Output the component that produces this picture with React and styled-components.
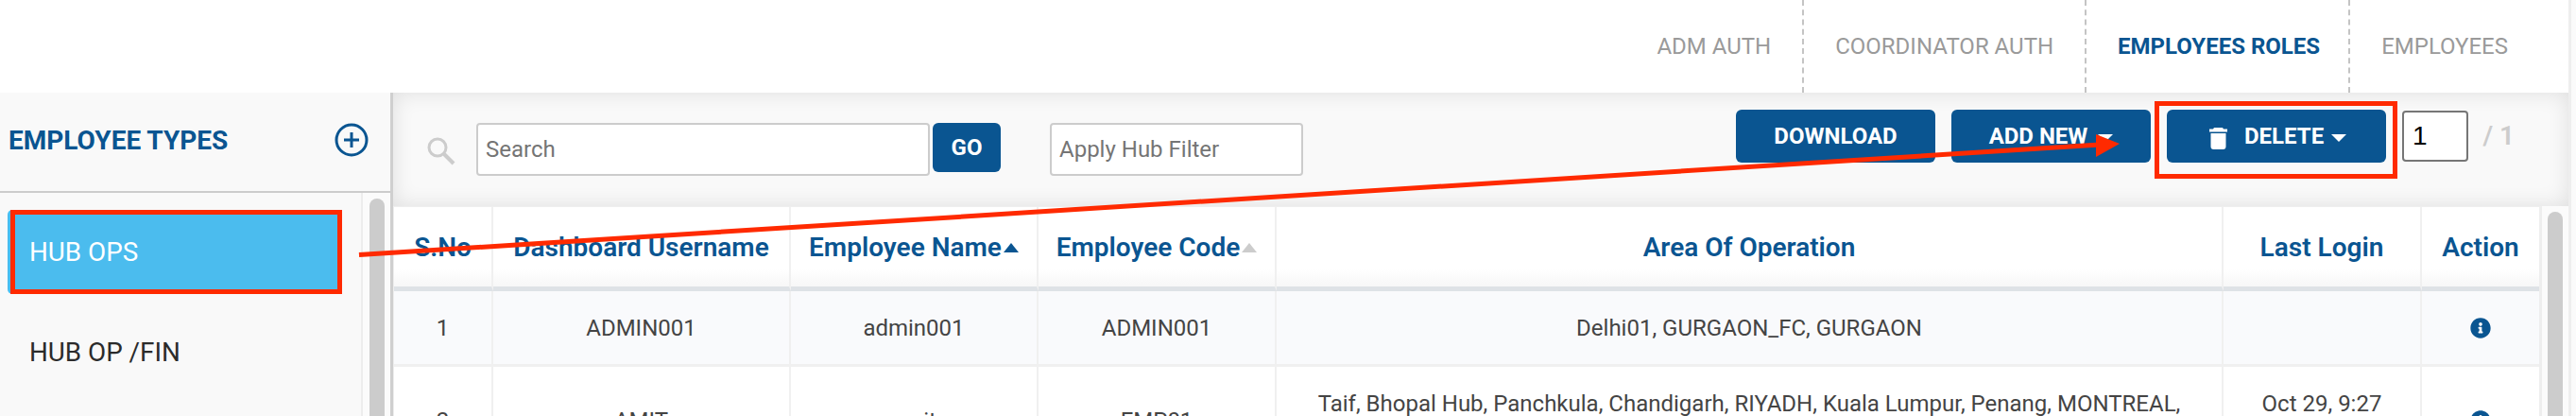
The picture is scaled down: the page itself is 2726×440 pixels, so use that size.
import React from "react";
import styled, { createGlobalStyle } from "styled-components";
import { FaInfoCircle } from "react-icons/fa";

const BLUE = "#0a5591";
const RED = "#ff2a00";

const GlobalStyle = createGlobalStyle`
  html, body {
    margin: 0;
    padding: 0;
    background: #fff;
  }
  * {
    box-sizing: border-box;
  }
  body {
    font-family: Roboto, "Liberation Sans", sans-serif;
    font-size: 24px;
  }
`;

const Page = styled.div`
  position: relative;
  display: flex;
  width: 2726px;
  height: 440px;
  overflow: hidden;
`;

const Frame = styled.div`
  width: 2718px;
  flex: none;
`;

const PageEdge = styled.div`
  flex: 1;
  background: #fafafa;
  border-left: 3px solid #eee;
`;

const TopBar = styled.div`
  height: 98px;
  display: flex;
  justify-content: flex-end;
  padding-right: 31px;
`;

const Tab = styled.div`
  display: flex;
  align-items: center;
  padding: ${(p) => (p.$active ? "0 30px 0 33px" : "0 33px")};
  color: ${(p) => (p.$active ? BLUE : "#9a9a9a")};
  font-weight: ${(p) => (p.$active ? 700 : 400)};
  border-left: ${(p) => (p.$first ? "none" : "2px dashed #c4c4c4")};
`;

const Content = styled.div`
  display: flex;
  height: 342px;
`;

const Sidebar = styled.aside`
  width: 416px;
  flex: none;
  background: #f9f9f9;
  border-right: 3px solid #cfcfcf;
`;

const SidebarHead = styled.div`
  height: 106px;
  display: flex;
  align-items: center;
  justify-content: space-between;
  padding: 0 23px 4px 9px;
  border-bottom: 2px solid #ccc;
`;

const SidebarTitle = styled.div`
  color: ${BLUE};
  font-size: 28px;
  font-weight: 700;
`;

const SidebarBody = styled.div`
  display: flex;
  height: 236px;
`;

const TypeList = styled.div`
  width: 384px;
  padding: 18px 20px 0 8px;
  border-right: 2px solid #ededed;
`;

const TypeItem = styled.div`
  position: relative;
  height: 89px;
  margin-bottom: 17px;
  padding-left: 23px;
  display: flex;
  align-items: center;
  font-size: 27.8px;
  color: ${(p) => (p.$active ? "#fff" : "#2b2b2b")};
  background: ${(p) => (p.$active ? "#4bbcee" : "transparent")};
  border-radius: 5px 0 0 5px;
`;

const RedFrame = styled.span`
  position: absolute;
  top: ${(p) => p.$top}px;
  right: ${(p) => p.$right}px;
  bottom: ${(p) => p.$bottom}px;
  left: ${(p) => p.$left}px;
  border: 5px solid ${RED};
  pointer-events: none;
`;

const Scrollbar = styled.div`
  flex: 1;
  padding: ${(p) => p.$top}px ${(p) => p.$right}px 0 ${(p) => p.$left}px;
  background: #fbfbfb;
`;

const ScrollThumb = styled.div`
  height: 400px;
  background: #ccc;
  border-radius: 8px 8px 0 0;
`;

const Main = styled.div`
  width: 2302px;
  flex: none;
`;

const Toolbar = styled.div`
  height: 120px;
  display: flex;
  align-items: flex-start;
  padding: 18px 57px 0 36px;
  background: #f9f9f9;
  box-shadow: inset 0 0 22px rgba(0, 0, 0, 0.11);
`;

const SearchIcon = styled.svg`
  width: 30px;
  height: 30px;
  margin: 29px 22px 0 0;
  flex: none;
`;

const Field = styled.input`
  width: ${(p) => p.$width}px;
  height: 56px;
  margin-top: 14px;
  padding: 0 8px;
  border: 2px solid #ccc;
  border-radius: 4px;
  background: #fff;
  font: inherit;
  color: #444;
  outline: none;
  flex: none;
  &::placeholder {
    color: #757575;
    opacity: 1;
  }
`;

const GoButton = styled.button`
  width: 72px;
  height: 52px;
  margin: 14px 52px 0 3px;
  flex: none;
  border: none;
  border-radius: 6px;
  background: ${BLUE};
  color: #fff;
  font: inherit;
  font-weight: 700;
`;

const ActionGroup = styled.div`
  display: flex;
  gap: 17px;
  margin-left: auto;
  flex: none;
`;

const ActionButton = styled.button`
  position: relative;
  width: ${(p) => p.$width}px;
  height: 56px;
  display: flex;
  align-items: center;
  justify-content: ${(p) => (p.$inset ? "flex-start" : "center")};
  padding: 0 0 0 ${(p) => p.$inset || 0}px;
  border: none;
  border-radius: 6px;
  background: ${BLUE};
  color: #fff;
  font: inherit;
  font-weight: 700;
  flex: none;
`;

const Caret = styled.span`
  width: 0;
  height: 0;
  margin-left: ${(p) => p.$gap}px;
  margin-top: 3px;
  border-left: 8px solid transparent;
  border-right: 8px solid transparent;
  border-top: 8px solid #fff;
`;

const TrashIcon = styled.svg`
  width: 19px;
  height: 23px;
  margin: 5px 18px 0 0;
  flex: none;
`;

const PageBox = styled.input`
  width: 70px;
  height: 54px;
  margin-top: 1px;
  padding: 0 9px;
  border: 2px solid #767676;
  border-radius: 4px;
  background: #fff;
  color: #000;
  font-family: "Liberation Sans", sans-serif;
  font-size: 28px;
  outline: none;
  flex: none;
`;

const PageTotal = styled.div`
  width: 49px;
  margin-left: -17px;
  line-height: 56px;
  font-size: 28px;
  font-weight: 600;
  color: #ccc;
  white-space: nowrap;
  flex: none;
  text-align: right;
`;

const TableRow = styled.div`
  display: flex;
  height: 222px;
`;

const TableWrap = styled.div`
  width: 2274px;
  flex: none;
  padding: 1px 3px 0 1px;
  background: #eee;
`;

const Table = styled.table`
  width: 2270px;
  table-layout: fixed;
  border-collapse: separate;
  border-spacing: 0;
`;

const HeadCell = styled.th`
  height: 89px;
  padding: 0;
  color: ${BLUE};
  font-size: 28px;
  font-weight: 600;
  text-align: center;
  white-space: nowrap;
  background: linear-gradient(#fff 78%, #f7f7f7);
  border-right: 2px solid #f0f0f0;
  border-bottom: 5px solid #dee2e6;
  &:last-child {
    border-right: none;
  }
`;

const SortArrow = styled.span`
  display: inline-block;
  width: 0;
  height: 0;
  margin-left: 2px;
  vertical-align: 4px;
  border-left: 8px solid transparent;
  border-right: 8px solid transparent;
  border-bottom: 10px solid ${(p) => (p.$on ? BLUE : "#ccc")};
`;

const Cell = styled.td`
  height: ${(p) => (p.$tall ? 116 : 80)}px;
  padding: 0 40px;
  color: #444;
  line-height: 36px;
  text-align: center;
  background: ${(p) => (p.$alt ? "#f9fafc" : "#fff")};
  border-right: 2px solid #f0f0f0;
  border-bottom: 3px solid #f0f0f0;
  &:last-child {
    border-right: none;
  }
`;

const TightCell = styled(Cell)`
  padding: 0 4px;
`;

const InfoIcon = styled(FaInfoCircle)`
  display: block;
  margin: 0 auto;
  color: ${BLUE};
  font-size: 22px;
`;

const Overlay = styled.svg`
  position: absolute;
  top: 0;
  left: 0;
  pointer-events: none;
`;

const columns = [105, 315, 262, 252, 1002, 210, 124];

const rows = [
  {
    no: 1,
    user: "ADMIN001",
    name: "admin001",
    code: "ADMIN001",
    area: "Delhi01, GURGAON_FC, GURGAON",
    login: ""
  },
  {
    no: 2,
    user: "AMIT",
    name: "amit",
    code: "EMP01",
    area: "Taif, Bhopal Hub, Panchkula, Chandigarh, RIYADH, Kuala Lumpur, Penang, MONTREAL, GURGAON",
    login: "Oct 29, 9:27 AM"
  }
];

function App() {
  return (
    <Page>
      <GlobalStyle />
      <Frame>
        <TopBar>
          <Tab $first>ADM AUTH</Tab>
          <Tab>COORDINATOR AUTH</Tab>
          <Tab $active>EMPLOYEES ROLES</Tab>
          <Tab>EMPLOYEES</Tab>
        </TopBar>

        <Content>
          <Sidebar>
            <SidebarHead>
              <SidebarTitle>EMPLOYEE TYPES</SidebarTitle>
              <svg width="36" height="36" viewBox="0 0 36 36" fill="none">
                <circle cx="18" cy="18" r="16" stroke={BLUE} strokeWidth="3" />
                <path d="M18 10v16M10 18h16" stroke={BLUE} strokeWidth="3" />
              </svg>
            </SidebarHead>
            <SidebarBody>
              <TypeList>
                <TypeItem $active>
                  HUB OPS
                  <RedFrame $top={0} $right={0} $bottom={0} $left={3} />
                </TypeItem>
                <TypeItem>HUB OP /FIN</TypeItem>
              </TypeList>
              <Scrollbar $top={6} $left={7} $right={6}>
                <ScrollThumb />
              </Scrollbar>
            </SidebarBody>
          </Sidebar>

          <Main>
            <Toolbar>
              <SearchIcon viewBox="0 0 30 30" fill="none">
                <circle cx="11" cy="11" r="9" stroke="#ccc" strokeWidth="3" />
                <path d="M18 18l10 10" stroke="#ccc" strokeWidth="4" />
              </SearchIcon>
              <Field $width={480} placeholder="Search" />
              <GoButton>GO</GoButton>
              <Field $width={268} placeholder="Apply Hub Filter" />
              <ActionGroup>
                <ActionButton $width={211}>DOWNLOAD</ActionButton>
                <ActionButton $width={211}>
                  ADD NEW
                  <Caret $gap={11} />
                </ActionButton>
                <ActionButton $width={232} $inset={45}>
                  <TrashIcon viewBox="0 0 19 23">
                    <path
                      fill="#fff"
                      d="M5 0h9l1 1.5h4v3H0v-3h4zM1.500 6h16v14a3 3 0 0 1-3 3h-10a3 3 0 0 1-3-3z"
                    />
                  </TrashIcon>
                  DELETE
                  <Caret $gap={8} />
                  <RedFrame $top={-9} $right={-12} $bottom={-17} $left={-13} />
                </ActionButton>
                <PageBox defaultValue="1" />
                <PageTotal>/ 1</PageTotal>
              </ActionGroup>
            </Toolbar>

            <TableRow>
              <TableWrap>
                <Table>
                  <colgroup>
                    {columns.map((w, i) => (
                      <col key={i} width={w} />
                    ))}
                  </colgroup>
                  <thead>
                    <tr>
                      <HeadCell>S.No</HeadCell>
                      <HeadCell>Dashboard Username</HeadCell>
                      <HeadCell>
                        Employee Name
                        <SortArrow $on />
                      </HeadCell>
                      <HeadCell>
                        Employee Code
                        <SortArrow />
                      </HeadCell>
                      <HeadCell>Area Of Operation</HeadCell>
                      <HeadCell>Last Login</HeadCell>
                      <HeadCell>Action</HeadCell>
                    </tr>
                  </thead>
                  <tbody>
                    {rows.map((row, i) => {
                      const alt = i % 2 === 0;
                      const tall = i === 1;
                      return (
                        <tr key={row.no}>
                          <TightCell $alt={alt} $tall={tall}>{row.no}</TightCell>
                          <TightCell $alt={alt} $tall={tall}>{row.user}</TightCell>
                          <TightCell $alt={alt} $tall={tall}>{row.name}</TightCell>
                          <TightCell $alt={alt} $tall={tall}>{row.code}</TightCell>
                          <Cell $alt={alt} $tall={tall}>{row.area}</Cell>
                          <Cell $alt={alt} $tall={tall}>{row.login}</Cell>
                          <TightCell $alt={alt} $tall={tall}>
                            <InfoIcon />
                          </TightCell>
                        </tr>
                      );
                    })}
                  </tbody>
                </Table>
              </TableWrap>
              <Scrollbar $top={6} $left={6} $right={6}>
                <ScrollThumb />
              </Scrollbar>
            </TableRow>
          </Main>
        </Content>
      </Frame>
      <PageEdge />

      <Overlay width="2726" height="440" viewBox="0 0 2726 440">
        <path d="M380 269.5L2222 153" stroke={RED} strokeWidth="5" fill="none" />
        <path d="M2218 142L2243 152L2218 166z" fill={RED} />
      </Overlay>
    </Page>
  );
}

export default App;
